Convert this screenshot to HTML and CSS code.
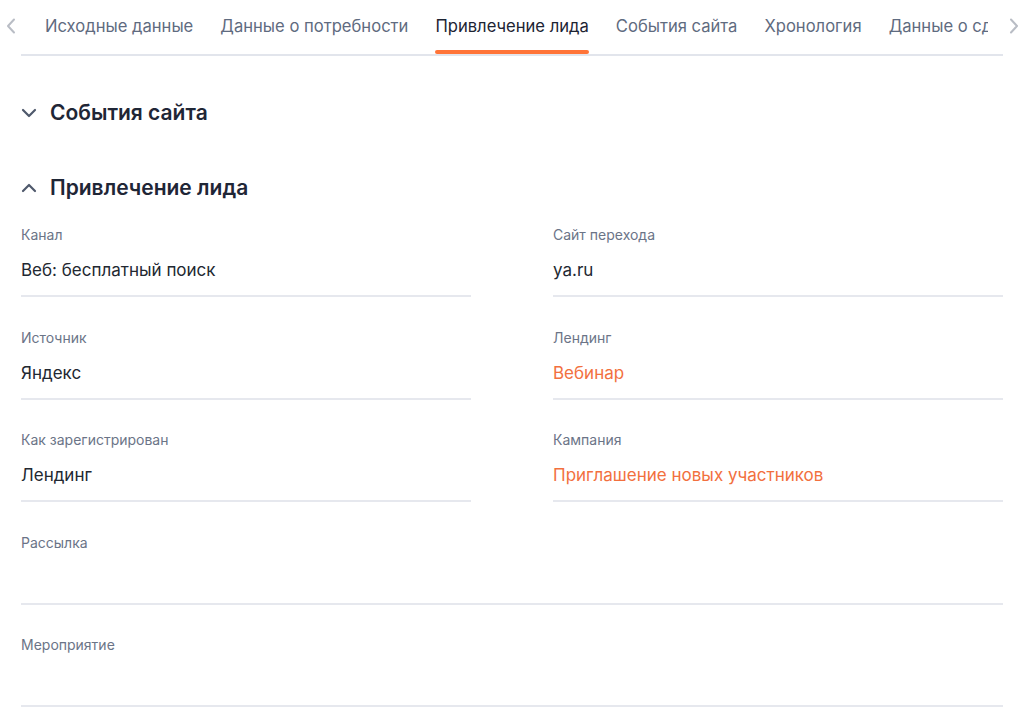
FILE: index.html
```html
<!DOCTYPE html>
<html lang="ru">
<head>
  <meta charset="UTF-8">
  <meta name="viewport" content="width=device-width, initial-scale=1.0">
  <title>Привлечение лида</title>
  <link rel="stylesheet" href="styles.css">
</head>
<body>
  <div class="tabs-bar">
    <button class="tabs-arrow" aria-label="Назад">
      <svg width="10" height="16" viewBox="0 0 10 16"><path d="M8 1.5 2 8l6 6.5" fill="none" stroke="currentColor" stroke-width="2" stroke-linecap="round" stroke-linejoin="round"/></svg>
    </button>
    <div class="tabs-strip">
      <div class="tabs-list">
        <div class="tab">Исходные данные</div>
        <div class="tab">Данные о потребности</div>
        <div class="tab active">Привлечение лида</div>
        <div class="tab">События сайта</div>
        <div class="tab">Хронология</div>
        <div class="tab">Данные о сделке</div>
      </div>
    </div>
    <button class="tabs-arrow" aria-label="Вперёд">
      <svg width="10" height="16" viewBox="0 0 10 16"><path d="M2 1.5 8 8l-6 6.5" fill="none" stroke="currentColor" stroke-width="2" stroke-linecap="round" stroke-linejoin="round"/></svg>
    </button>
  </div>

  <div class="content">
    <div class="section-head">
      <svg class="chevron" width="16" height="10" viewBox="0 0 16 10"><path d="M2 2l6 6 6-6" fill="none" stroke="currentColor" stroke-width="2.2" stroke-linecap="round" stroke-linejoin="round"/></svg>
      <h2>События сайта</h2>
    </div>

    <div class="section-head open">
      <svg class="chevron" width="16" height="10" viewBox="0 0 16 10"><path d="M2 8l6-6 6 6" fill="none" stroke="currentColor" stroke-width="2.2" stroke-linecap="round" stroke-linejoin="round"/></svg>
      <h2>Привлечение лида</h2>
    </div>

    <div class="fields">
      <div class="field">
        <div class="field-label">Канал</div>
        <div class="field-value">Веб: бесплатный поиск</div>
      </div>
      <div class="field">
        <div class="field-label">Сайт перехода</div>
        <div class="field-value">ya.ru</div>
      </div>
      <div class="field">
        <div class="field-label">Источник</div>
        <div class="field-value">Яндекс</div>
      </div>
      <div class="field">
        <div class="field-label">Лендинг</div>
        <div class="field-value link">Вебинар</div>
      </div>
      <div class="field">
        <div class="field-label">Как зарегистрирован</div>
        <div class="field-value">Лендинг</div>
      </div>
      <div class="field">
        <div class="field-label">Кампания</div>
        <div class="field-value link">Приглашение новых участников</div>
      </div>
      <div class="field wide">
        <div class="field-label">Рассылка</div>
        <div class="field-value"></div>
      </div>
      <div class="field wide">
        <div class="field-label">Мероприятие</div>
        <div class="field-value"></div>
      </div>
    </div>
  </div>
</body>
</html>
```

FILE: styles.css
```css
body {
  margin: 0;
  font-family: Inter, "Noto Sans", sans-serif;
  background-color: #fff;
  color: #222831;
}

.tabs-bar {
  display: flex;
  align-items: flex-start;
}

.tabs-arrow {
  width: 21px;
  height: 52px;
  padding: 0;
  border: none;
  background: none;
  color: #b9bdc5;
  display: flex;
  align-items: center;
  justify-content: center;
}

.tabs-strip {
  flex: 1;
  overflow: hidden;
  border-bottom: 2px solid #e2e5ec;
  padding-right: 15px;
}

.tabs-list {
  display: flex;
  gap: 27px;
  padding-left: 24px;
  overflow: hidden;
  white-space: nowrap;
}

.tab {
  position: relative;
  padding: 15px 0 17px;
  font-size: 16.6px;
  line-height: 22px;
  color: #5f6b80;
  flex-shrink: 0;
}

.tab.active {
  color: #1d2433;
}

.tab.active::after {
  content: "";
  position: absolute;
  left: 0;
  right: 0;
  bottom: 0;
  height: 4px;
  border-radius: 2px;
  background-color: #ff7438;
}

.content {
  padding: 42px 21px 0;
}

.section-head {
  display: flex;
  align-items: center;
  gap: 13px;
  height: 30px;
  margin-bottom: 45px;
}

.section-head.open {
  margin-bottom: 22px;
}

.chevron {
  color: #4f596c;
}

.section-head h2 {
  margin: 0;
  font-size: 21px;
  line-height: 30px;
  font-weight: 600;
  color: #1f2636;
}

.fields {
  display: grid;
  grid-template-columns: 1fr 1fr;
  column-gap: 82px;
  row-gap: 30.5px;
}

.field {
  border-bottom: 2px solid #e6e8ee;
  padding-bottom: 13px;
}

.field.wide {
  grid-column: 1 / -1;
}

.field-label {
  font-size: 14px;
  line-height: 20px;
  color: #6b7487;
}

.field-value {
  margin-top: 13px;
  font-size: 17px;
  line-height: 24px;
  height: 24px;
  color: #222831;
}

.field-value.link {
  color: #f2703e;
}
```
